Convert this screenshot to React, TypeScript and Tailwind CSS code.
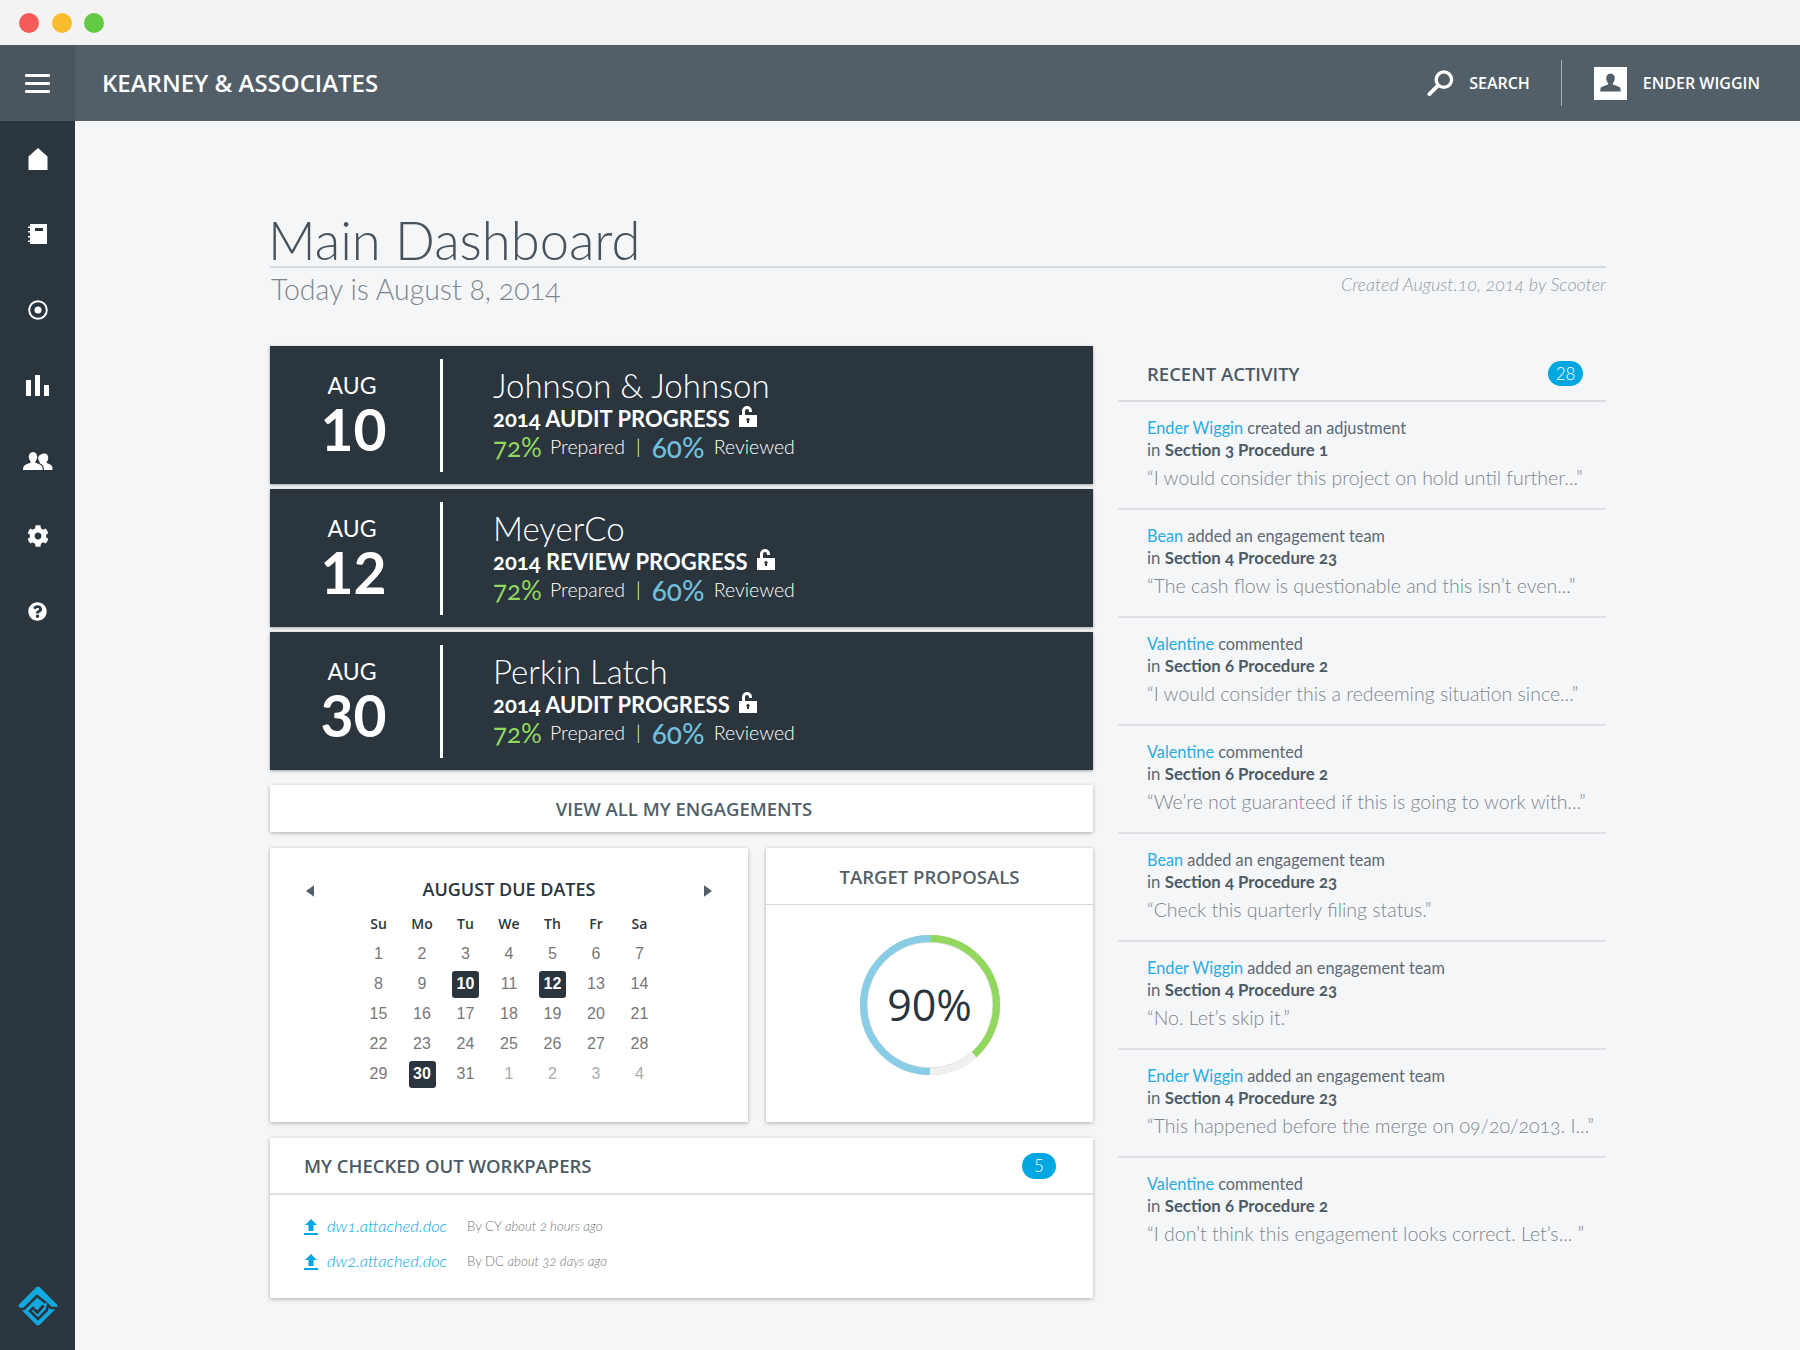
import React from "react";
import { FaCog, FaQuestionCircle } from "react-icons/fa";

const caps = "font-['Open_Sans',sans-serif] font-semibold lining-nums";

const Lock = ({ className = "" }: { className?: string }) => (
  <svg viewBox="0 0 18 21" className={`w-[18px] h-[21px] ${className}`}>
    <path fill="#fff" d="M0 9h18v12H0zM3 9V5a5 5 0 0 1 10 0v1h-3V5a2 2 0 0 0-4 0v4z" />
    <path fill="#2b353e" d="M8 13.5h2V17H8z" />
    <circle cx="9" cy="13.5" r="1.6" fill="#2b353e" />
  </svg>
);

const UploadIcon = () => (
  <svg viewBox="0 0 14 16" className="w-[14px] h-[16px] shrink-0">
    <path fill="#00a7e1" d="M7 0l6 6H9.5v6h-5V6H1zM0 14h14v2H0z" />
  </svg>
);

const sideIcons = [
  <svg key="h" viewBox="0 0 20 22" className="w-[20px] h-[22px]"><path fill="#fff" d="M10 0l9.500 8.500V22H.5V8.500z" /></svg>,
  <svg key="n" viewBox="0 0 19 20" className="w-[19px] h-[20px]"><path fill="#fff" d="M2 0h17v20H2v-2H0v-1.500h2v-3H0V12h2V8.500H0V7h2V4H0V2.500h2z" /><path fill="#2b353e" d="M7 4h8v3H7z" /></svg>,
  <svg key="t" viewBox="0 0 20 20" className="w-[20px] h-[20px]"><circle cx="10" cy="10" r="8.800" fill="none" stroke="#fff" strokeWidth="2" /><circle cx="10" cy="10" r="3.500" fill="#fff" /></svg>,
  <svg key="b" viewBox="0 0 23 21" className="w-[23px] h-[21px]"><path fill="#fff" d="M0 5h5v16H0zM9 0h5v21H9zM18 10h5v11h-5z" /></svg>,
  <svg key="u" viewBox="0 0 30 18" className="w-[30px] h-[18px]"><path fill="#fff" d="M10 0c2.700 0 4.200 2.200 4.200 4.800 0 2-.8 3.700-1.800 4.700v1.200c3 .9 5.600 2 6.600 3.500.5.800.7 2 .8 3.800H0c.1-1.800.3-3 .8-3.800 1-1.500 3.600-2.600 6.800-3.500V9.500c-1-1-1.800-2.700-1.800-4.700C5.800 2.200 7.300 0 10 0z" /><path fill="#fff" d="M21.500 1.500c2.300 0 3.700 1.900 3.700 4.200 0 1.800-.7 3.200-1.500 4.200v1c2.500.8 4.300 1.800 5.200 3 .5.800.6 2 .6 4.100h-8.500c-.1-2-.5-3.500-1.300-4.500-.6-.8-1.700-1.600-3-2.300V9.900c-.8-1-1.500-2.400-1.500-4.200 0-2.300 4-4.200 6.300-4.200z" /></svg>,
  <FaCog key="c" className="text-white text-[22px]" />,
  <FaQuestionCircle key="q" className="text-white text-[19px]" />,
];

const engagements = [
  { d: "10", name: "Johnson & Johnson", kind: "AUDIT" },
  { d: "12", name: "MeyerCo", kind: "REVIEW" },
  { d: "30", name: "Perkin Latch", kind: "AUDIT" },
];

type Act = { who: string; what: string; where: string; quote: string };
const WIGGIN = "Ender Wiggin";
const TEAM = "added an engagement team";
const S4 = "Section 4 Procedure 23";
const S6 = "Section 6 Procedure 2";
const activity: Act[] = [
  { who: WIGGIN, what: "created an adjustment", where: "Section 3 Procedure 1", quote: "“I would consider this project on hold until further...”" },
  { who: "Bean", what: TEAM, where: S4, quote: "“The cash flow is questionable and this isn’t even...”" },
  { who: "Valentine", what: "commented", where: S6, quote: "“I would consider this a redeeming situation since...”" },
  { who: "Valentine", what: "commented", where: S6, quote: "“We’re not guaranteed if this is going to work with...”" },
  { who: "Bean", what: TEAM, where: S4, quote: "“Check this quarterly filing status.”" },
  { who: WIGGIN, what: TEAM, where: S4, quote: "“No. Let’s skip it.”" },
  { who: WIGGIN, what: TEAM, where: S4, quote: "“This happened before the merge on 09/20/2013. I...”" },
  { who: "Valentine", what: "commented", where: S6, quote: "“I don’t think this engagement looks correct. Let’s... ”" },
];

const weeks = [
  [1, 2, 3, 4, 5, 6, 7],
  [8, 9, 10, 11, 12, 13, 14],
  [15, 16, 17, 18, 19, 20, 21],
  [22, 23, 24, 25, 26, 27, 28],
  [29, 30, 31, 1, 2, 3, 4],
];

function Calendar() {
  return (
    <div className="w-[478px] h-[274px] bg-white shadow-[0_1px_4px_rgba(0,0,0,0.3)] pt-[28px]">
      <div className="flex items-center justify-between px-[36px] h-[26px]">
        <svg viewBox="0 0 7 10" className="w-[8px] h-[12px] mt-[3px]"><path fill="#535f68" d="M7 0v10L0 5z" /></svg>
        <div className={`text-[18px] text-[#2b353e] ${caps}`}>AUGUST DUE DATES</div>
        <svg viewBox="0 0 7 10" className="w-[8px] h-[12px] mt-[3px]"><path fill="#535f68" d="M0 0v10l7-5z" /></svg>
      </div>
      <div className="w-[304.500px] mx-auto mt-[6px] grid grid-cols-7 font-['Liberation_Sans',sans-serif] text-[16px] text-[#777] lining-nums">
        {["Su", "Mo", "Tu", "We", "Th", "Fr", "Sa"].map((d) => (
          <div key={d} className="h-[31px] flex items-center justify-center font-['Open_Sans',sans-serif] text-[14px] font-semibold text-[#2b353e]">{d}</div>
        ))}
        {weeks.flatMap((w, wi) =>
          w.map((n) => {
            const on = (wi === 1 && (n === 10 || n === 12)) || (wi === 4 && n === 30);
            const other = wi === 4 && n < 10;
            return (
              <div key={`${wi}-${n}`} className="h-[30px] flex items-center justify-center">
                {on ? (
                  <span className="w-[27px] h-[27px] rounded-[3px] bg-[#2b353e] text-white font-bold flex items-center justify-center">{n}</span>
                ) : (
                  <span className={other ? "text-[#aaa]" : ""}>{n}</span>
                )}
              </div>
            );
          })
        )}
      </div>
    </div>
  );
}

function Ring() {
  const r = 66.5;
  const c = 2 * Math.PI * r;
  const seg = (from: number, to: number, color: string) => (
    <circle cx="70" cy="70" r={r} fill="none" stroke={color} strokeWidth="7" strokeDasharray={`${((to - from) / 360) * c} ${c}`} transform={`rotate(${from - 90} 70 70)`} />
  );
  return (
    <div className="relative w-[140px] h-[140px]">
      <svg viewBox="0 0 140 140" className="w-[140px] h-[140px]">
        <circle cx="70" cy="70" r="69.700" fill="none" stroke="#ccc" strokeWidth="0.800" />
        <circle cx="70" cy="70" r="63" fill="none" stroke="#ccc" strokeWidth="0.800" />
        {seg(138, 180, "#f0f0f0")}
        {seg(0, 138, "#93d85e")}
        {seg(180, 360, "#88cce6")}
      </svg>
      <div className="absolute inset-0 flex items-center justify-center text-[43px] font-medium text-[#2b353e] font-['Open_Sans',sans-serif] lining-nums">90%</div>
    </div>
  );
}

export default function App() {
  return (
    <div className="w-[1800px] h-[1350px] flex flex-col overflow-hidden bg-[#f5f6f8] font-['Lato',sans-serif] oldstyle-nums">
      <div className="h-[45px] bg-[#f3f3f3] flex items-center pl-[19px] shrink-0">
        <span className="w-[20px] h-[20px] rounded-full bg-[#f45c5a]" />
        <span className="w-[20px] h-[20px] rounded-full bg-[#f9bc2f] ml-[13px]" />
        <span className="w-[20px] h-[20px] rounded-full bg-[#62cb43] ml-[12px]" />
      </div>

      <header className="h-[76px] bg-[#535f68] flex items-center text-white shrink-0">
        <div className="w-[75px] h-full bg-[#4a555d] flex flex-col items-center justify-center gap-[5px]">
          <span className="w-[25px] h-[3px] bg-white rounded-[1px]" />
          <span className="w-[25px] h-[3px] bg-white rounded-[1px]" />
          <span className="w-[25px] h-[3px] bg-white rounded-[1px]" />
        </div>
        <div className={`ml-[27px] text-[24px] ${caps}`}>KEARNEY &amp; ASSOCIATES</div>
        <div className="ml-auto flex items-center h-full pr-[40px]">
          <svg viewBox="0 0 28 28" className="w-[27px] h-[27px] mr-[15px]">
            <circle cx="17.500" cy="10" r="8" fill="none" stroke="#fff" strokeWidth="3.500" />
            <path stroke="#fff" strokeWidth="4" strokeLinecap="round" d="M11 16.500L2.500 25" />
          </svg>
          <span className={`text-[16px] ${caps}`}>SEARCH</span>
          <span className="w-px h-[46px] bg-[#aab1b6] ml-[31px] mr-[32px]" />
          <span className="w-[33px] h-[33px] bg-white flex items-center justify-center mr-[16px]">
            <svg viewBox="0 0 22 20" className="w-[21px] h-[20px]"><path fill="#535f68" d="M11 0c3 0 4.500 2.300 4.500 5 0 2.200-1 4-2 5v1.500c3 1 6 1.800 7.500 3.200.5.700.7 1.800.7 4.300H.3c0-2.500.2-3.600.7-4.300C2.500 13.300 5.500 12.500 8.500 11.500V10c-1-1-2-2.800-2-5 0-2.700 1.500-5 4.500-5z" /></svg>
          </span>
          <span className={`text-[16px] ${caps}`}>ENDER WIGGIN</span>
        </div>
      </header>

      <div className="flex flex-1 min-h-0">
        <aside className="w-[75px] bg-[#2b353e] flex flex-col items-center shrink-0 pb-[22px]">
          {sideIcons.map((ic, i) => (
            <div key={i} className="h-[75.500px] w-full flex items-center justify-center">{ic}</div>
          ))}
          <svg viewBox="0 0 44 44" className="w-[44px] h-[44px] mt-auto">
            <rect x="7.500" y="7.500" width="29" height="29" rx="2.500" transform="rotate(45 22 22)" fill="#12a8e0" />
            <path fill="none" stroke="#2b353e" strokeWidth="2.600" d="M3 25l5 0L21 12l9 7" />
            <path fill="none" stroke="#2b353e" strokeWidth="2.600" d="M41 24h-6l-3-3-1 5-9 9-8-8 4-4" />
            <path fill="none" stroke="#2b353e" strokeWidth="2.800" d="M18 25l3.500 3.500 6-7" />
          </svg>
        </aside>

        <main className="flex-1 pl-[195px] pr-[194px] pt-[87px]">
          <div className="border-b-2 border-[#d5d8dc] h-[60px]">
            <h1 className="text-[52.500px] leading-[64px] font-light text-[#46535d] -ml-[2px]">Main Dashboard</h1>
          </div>
          <div className="flex justify-between items-start h-[78px]">
            <div className="text-[28.500px] leading-[42px] font-light text-[#7d858d] ml-[1px]">Today is August 8, 2014</div>
            <div className="text-[18px] leading-[32px] font-light italic text-[#939ba3]">Created August.10, 2014 by Scooter</div>
          </div>

          <div className="flex justify-between items-start">
            <div className="w-[823px]">
              <div className="flex flex-col gap-[5px]">
                {engagements.map((e) => (
                  <div key={e.d} className="h-[138px] bg-[#2b353e] shadow-[0_1px_3px_rgba(0,0,0,0.35)] flex items-center text-white">
                    <div className="w-[173px] h-[113px] border-r-[3px] border-white flex flex-col items-center pt-[12px] pr-[3px] shrink-0">
                      <div className="text-[23px] leading-[28px] mr-[3px]">AUG</div>
                      <div className="text-[57px] leading-[60px] font-bold lining-nums">{e.d}</div>
                    </div>
                    <div className="pl-[50px] -mt-[4px]">
                      <div className="text-[33px] leading-[40px] font-light">{e.name}</div>
                      <div className="flex items-center gap-[9px] text-[22px] leading-[27px] font-bold">
                        <span>2014 {e.kind} PROGRESS</span>
                        <Lock className="-mt-[3px]" />
                      </div>
                      <div className="flex items-center text-[19.500px] leading-[30px]">
                        <span className="text-[26px] text-[#93d85e] w-[57px]">72%</span>
                        <span className="font-light">Prepared</span>
                        <span className="font-light mx-[11px]">|</span>
                        <span className="text-[28px] font-medium text-[#6fbfdc] w-[62px]">60%</span>
                        <span className="font-light">Reviewed</span>
                      </div>
                    </div>
                  </div>
                ))}
              </div>

              <div className={`mt-[15px] h-[47px] bg-white shadow-[0_1px_4px_rgba(0,0,0,0.3)] flex items-center justify-center pl-[5px] text-[18.500px] text-[#535f68] ${caps}`}>VIEW ALL MY ENGAGEMENTS</div>

              <div className="mt-[16px] flex justify-between">
                <Calendar />
                <div className="w-[327px] h-[274px] bg-white shadow-[0_1px_4px_rgba(0,0,0,0.3)]">
                  <div className={`h-[57px] border-b border-[#d5d8dc] flex items-center justify-center text-[18.500px] text-[#535f68] pt-[1px] ${caps}`}>TARGET PROPOSALS</div>
                  <div className="flex justify-center pt-[30px]"><Ring /></div>
                </div>
              </div>

              <div className="mt-[16px] h-[160px] bg-white shadow-[0_1px_4px_rgba(0,0,0,0.3)]">
                <div className="h-[57px] border-b-2 border-[#dde0e4] flex items-center justify-between pl-[34px] pr-[37px]">
                  <span className={`text-[18.500px] text-[#4d5a64] ${caps}`}>MY CHECKED OUT WORKPAPERS</span>
                  <span className="w-[34px] h-[26px] rounded-full bg-[#00a7e1] text-white text-[17px] font-light flex items-center justify-center lining-nums">5</span>
                </div>
                <div className="pl-[34px] pt-[14px]">
                  {[
                    ["dw1.attached.doc", "By CY", "about 2 hours ago"],
                    ["dw2.attached.doc", "By DC", "about 32 days ago"],
                  ].map(([f, by, when]) => (
                    <div key={f} className="h-[35px] flex items-center">
                      <UploadIcon />
                      <span className="ml-[9px] w-[140px] text-[16.500px] italic font-light text-[#00a7e1]">{f}</span>
                      <span className="text-[13.200px] font-light text-[#777]">{by} <i>{when}</i></span>
                    </div>
                  ))}
                </div>
              </div>
            </div>

            <div className="w-[488px]">
              <div className="h-[56px] border-b-2 border-[#d9dbde] flex items-center justify-between pl-[29px] pr-[23px] pt-[1px]">
                <span className={`text-[18.500px] text-[#4d5a64] ${caps}`}>RECENT ACTIVITY</span>
                <span className="w-[35px] h-[25px] rounded-full bg-[#00a7e1] text-white text-[17px] font-light flex items-center justify-center lining-nums">28</span>
              </div>
              {activity.map((a, i) => (
                <div key={i} className={`h-[108px] pl-[29px] pt-[15px] ${i < activity.length - 1 ? "border-b-2 border-[#dfe1e4]" : ""}`}>
                  <div className="text-[16.300px] leading-[22px] text-[#5d6972]"><span className="text-[#29abe2]">{a.who}</span> {a.what}</div>
                  <div className="text-[16.800px] leading-[21px] text-[#5d6972]">in <b className="font-bold text-[#4d5a64]">{a.where}</b></div>
                  <div className="text-[19.500px] leading-[30px] mt-[3px] font-light text-[#7d858d] whitespace-nowrap">{a.quote}</div>
                </div>
              ))}
            </div>
          </div>
        </main>
      </div>
    </div>
  );
}
